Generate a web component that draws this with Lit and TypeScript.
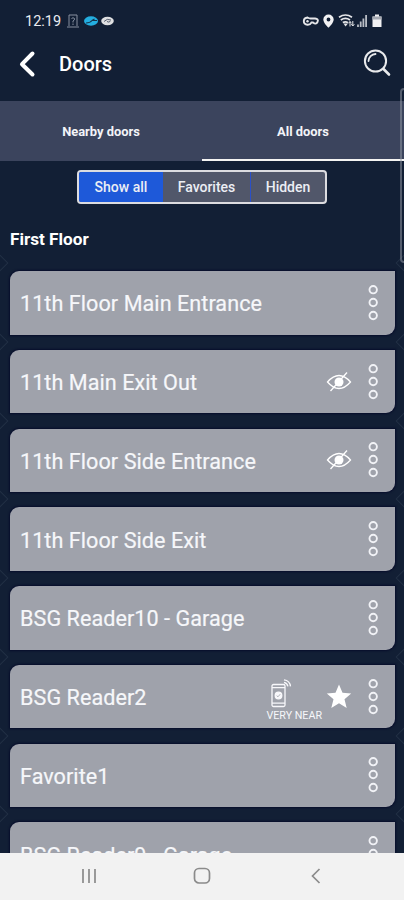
import { LitElement, html, css, svg, nothing } from "lit";
import { customElement, property } from "lit/decorators.js";

interface Door {
  name: string;
  state?: "hidden" | "near";
}

const DOORS: Door[] = [
  { name: "11th Floor Main Entrance" },
  { name: "11th Main Exit Out", state: "hidden" },
  { name: "11th Floor Side Entrance", state: "hidden" },
  { name: "11th Floor Side Exit" },
  { name: "BSG Reader10 - Garage" },
  { name: "BSG Reader2", state: "near" },
  { name: "Favorite1" },
  { name: "BSG Reader9 - Garage" },
];

@customElement("door-card")
export class DoorCard extends LitElement {
  @property({ attribute: false }) door!: Door;

  static styles = css`
    :host {
      position: relative;
      display: flex;
      align-items: center;
      box-sizing: border-box;
      flex: none;
      height: 63.5px;
      padding: 0 15px 0 10px;
      background: #9fa2ab;
      border-radius: 9px 0 9px 0;
      box-shadow: 0 0 2px 1px #070d2b;
      color: #f6f7fa;
    }
    /* faint diamond ornaments at the screen edges, between the cards */
    :host::before,
    :host::after {
      content: "";
      position: absolute;
      top: -14px;
      width: 10px;
      height: 10px;
      border: 1px solid rgba(120, 135, 150, 0.16);
      transform: rotate(45deg);
    }
    :host::before {
      left: -16px;
    }
    :host::after {
      right: -15px;
    }
    .name {
      flex: 1;
      font-size: 21.6px;
      line-height: 28px;
      letter-spacing: 0.05px;
      padding-top: 3px;
      white-space: nowrap;
      -webkit-text-stroke: 0.2px #f6f7fa;
    }
    svg {
      display: block;
      flex: none;
    }
    .eye,
    .star {
      margin-right: 14px;
    }
    .near {
      display: flex;
      flex-direction: column;
      align-items: center;
      margin: 6px 4px 0 0;
      font-size: 10.700px;
      line-height: 12px;
      white-space: nowrap;
    }
    .near svg {
      margin: 0 26px 1px 0;
    }
  `;

  private extras() {
    if (this.door.state === "hidden") {
      return html`<svg class="eye" width="26" height="24" viewBox="0 0 26 24" fill="none" stroke="#fff" stroke-width="1.3">
        <path d="M1.500 12Q13 -1 24.500 12Q13 25 1.500 12Z" />
        <circle cx="13" cy="12" r="4.500" fill="#fff" stroke="none" />
        <path d="M4.500 21L21 2.500" />
      </svg>`;
    }
    if (this.door.state === "near") {
      return html`<div class="near">
          <svg width="24" height="32" viewBox="0 0 24 32" fill="none" stroke="#f8f8fb" stroke-width="1.300">
            <rect x="3" y="7.500" width="13" height="22" rx="1.500" />
            <path d="M3 10.700H16M3 26.200H16" />
            <circle cx="9.500" cy="18.500" r="3.300" fill="#f8f8fb" />
            <path d="M7.700 18.700L9 19.800L11.200 17.200" stroke="#9fa2ab" stroke-width=".8" />
            <path d="M15 2.800A7.500 7.500 0 0 1 21.500 9.300M15 5.400A5 5 0 0 1 18.900 9.300" />
          </svg>
          VERY NEAR
        </div>
        <svg class="star" width="26" height="26" viewBox="0 0 26 26">
          <path fill="#fff" d="M13 .5L16.500 8.800L25.200 9.500L18.500 15.300L20.700 24L13 19.300L5.300 24L7.500 15.300L.8 9.500L9.500 8.800Z" />
        </svg>`;
    }
    return nothing;
  }

  render() {
    return html`<span class="name">${this.door.name}</span>${this.extras()}
      <svg width="14" height="38" viewBox="0 0 14 38" fill="none" stroke="#f1f2f6" stroke-width="1.900">
        ${[5.7, 18.5, 31.5].map((y) => svg`<circle cx="7.200" cy=${y} r="3.700" />`)}
      </svg>`;
  }
}

@customElement("app-root")
export class AppRoot extends LitElement {
  static styles = css`
    :host {
      position: relative;
      display: flex;
      flex-direction: column;
      height: 900px;
      overflow: hidden;
      background: #121f35;
      color: #fff;
      font-family: Roboto, sans-serif;
    }
    svg {
      display: block;
      flex: none;
    }
    .status {
      display: flex;
      align-items: center;
      justify-content: space-between;
      height: 42px;
      padding: 0 20px 0 25px;
      box-sizing: border-box;
      flex: none;
    }
    .clock {
      display: flex;
      align-items: center;
      gap: 5px;
      font-size: 14.500px;
      color: #e9ebf0;
    }
    .clock svg:nth-of-type(n + 2) {
      margin-left: -1.500px;
    }
    .header {
      display: flex;
      align-items: center;
      height: 59px;
      flex: none;
      box-sizing: border-box;
      padding: 0 13px 16px 18px;
    }
    .title {
      flex: 1;
      margin-left: 21px;
      font-size: 20px;
      font-weight: 500;
    }
    .search {
      margin-bottom: 2px;
    }
    .tabs {
      display: flex;
      flex: none;
      height: 60px;
      background: #3b445d;
      font-size: 12.900px;
      font-weight: 700;
      color: #f3f4f8;
    }
    .tab {
      display: flex;
      align-items: center;
      justify-content: center;
      flex: 1;
      box-sizing: border-box;
      padding-top: 3px;
      border-bottom: 2px solid transparent;
    }
    .tab.active {
      border-color: #f4f4f2;
    }
    .segments {
      display: flex;
      flex: none;
      align-self: center;
      width: 250px;
      height: 34px;
      margin-top: 8.500px;
      box-sizing: border-box;
      border: 2px solid #dcdce0;
      border-radius: 4px;
      overflow: hidden;
      background: #51576a;
      font-size: 14px;
      font-weight: 500;
      color: #eceef4;
    }
    .segment {
      display: flex;
      align-items: center;
      justify-content: center;
      box-sizing: border-box;
      width: 84px;
    }
    .segment.wide {
      width: 87px;
    }
    .segment.last {
      flex: 1;
      border-left: 1px solid #2a50c8;
    }
    .segment.active {
      background: #1e59d9;
    }
    .section {
      flex: none;
      margin: 25.500px 10px 21px;
      font-size: 17.200px;
      line-height: 21px;
      font-weight: 700;
      letter-spacing: -0.02px;
    }
    .list {
      display: flex;
      flex-direction: column;
      gap: 15.250px;
      flex: 1;
      min-height: 0;
      padding: 16px 9px 0 10px;
      margin-top: -16px;
      overflow: hidden;
    }
    .nav {
      display: flex;
      align-items: center;
      justify-content: space-between;
      flex: none;
      height: 47px;
      box-sizing: border-box;
      padding: 0 79px 1px;
      background: #f2f2f2;
      z-index: 1;
    }
    .edge {
      position: absolute;
      top: 88px;
      right: -4px;
      width: 8px;
      height: 175px;
      box-sizing: border-box;
      border: 2px solid rgba(150, 155, 168, 0.5);
      border-radius: 6px;
    }
  `;

  render() {
    return html`
      <div class="status">
        <div class="clock">
          <span>12:19</span>
          <svg width="14" height="16" viewBox="0 0 14 16" fill="none" stroke="#8790a0" stroke-width="1">
            <path d="M3 13V2H11V13M1 14H13M5.500 5.500Q7 4 8.500 5.500Q9 7 7 8V9.500M7 10.500V12" />
          </svg>
          <svg width="14" height="10" viewBox="0 0 14 10">
            <ellipse cx="7" cy="5" rx="7" ry="4.700" fill="#24aee0" />
            <path d="M2 7Q6 7 8 4.500H13M8 4.500L10.500 3" fill="none" stroke="#14334b" stroke-width="1.100" />
          </svg>
          <svg width="13" height="10" viewBox="0 0 13 10">
            <ellipse cx="6.500" cy="5" rx="6.300" ry="4.200" fill="#dedfe1" />
            <path d="M3 5.500Q6 2 10 4M6 5.500Q8 7 9.500 5" fill="none" stroke="#596170" stroke-width="1" />
          </svg>
        </div>
        <svg width="84" height="16" viewBox="0 0 84 16" fill="none" stroke="#e5e6e9">
          <path d="M7.500 4.500Q9 5.500 10.500 5.500H15Q19 6 17.500 9Q16 12 13 9.500H11.500Q10 12 7.500 11.800Q3.800 11.500 3.800 8Q4 4.800 7.500 4.500Z" stroke-width="1.900" />
          <circle cx="7.500" cy="8.300" r="1.200" fill="#e5e6e9" stroke="none" />
          <path d="M28.500 1.500A5.200 5.200 0 0 0 23.300 6.500C23.300 10 28.500 14.700 28.500 14.700S33.700 10 33.700 6.500A5.200 5.200 0 0 0 28.500 1.500ZM28.500 4.600A1.900 1.900 0 1 1 28.500 8.400A1.900 1.900 0 0 1 28.500 4.600Z" fill="#f1f1f3" fill-rule="evenodd" stroke="none" />
          <path d="M39 4.200Q45.500 -.2 52 4.200M40.800 7Q45.500 3.800 50 7M42.800 9.600Q45.500 8 48 9.600" stroke-width="1.700" />
          <path d="M45.500 13.500L43.500 10.500H48Z" fill="#e5e6e9" stroke="none" />
          <path d="M50 13.500V8.500M48.500 10.300L50 8.500L51.500 10.300M52.800 8V13M51.300 11.200L52.800 13L54.300 11.200" stroke-width="1" />
          <path d="M58 14V11.500M60.700 14V8.500M63.400 14V5.500M66.100 14V2" stroke="#b9bdc5" stroke-width="1.800" />
          <path d="M72.500 3.500H75V1.500H79V3.500H81.500V14H72.500Z" fill="#f1f1f3" stroke="none" />
          <path d="M72.500 3.500H81.500V6.500H72.500Z" fill="#a5a9b2" stroke="none" />
        </svg>
      </div>
      <div class="header">
        <svg width="20" height="28" viewBox="0 0 20 28" fill="none" stroke="#fff" stroke-width="4" stroke-linecap="round" stroke-linejoin="round">
          <path d="M14.500 3.500L4 14.200L14.500 24.500" />
        </svg>
        <span class="title">Doors</span>
        <svg class="search" width="28" height="28" viewBox="0 0 28 28" fill="none" stroke="#e9eaec" stroke-linecap="round">
          <circle cx="12.500" cy="12" r="10.600" stroke-width="2" />
          <path d="M20.500 20L26 25.500" stroke-width="2.600" />
          <path d="M5.500 12A7.200 7.200 0 0 1 12.500 5" stroke-width="1.800" />
        </svg>
      </div>
      <div class="tabs">
        <div class="tab">Nearby doors</div>
        <div class="tab active">All doors</div>
      </div>
      <div class="segments">
        <div class="segment active">Show all</div>
        <div class="segment wide">Favorites</div>
        <div class="segment last">Hidden</div>
      </div>
      <div class="section">First Floor</div>
      <div class="list">
        ${DOORS.map((door) => html`<door-card .door=${door}></door-card>`)}
      </div>
      <div class="nav">
        <svg width="20" height="18" viewBox="0 0 20 18" stroke="#8b8b8b" stroke-width="1.700">
          <path d="M4 2V16M10 2V16M16 2V16" />
        </svg>
        <svg width="20" height="18" viewBox="0 0 20 18" fill="none" stroke="#8b8b8b" stroke-width="1.700">
          <rect x="2.500" y="1.500" width="15" height="14.500" rx="4.500" />
        </svg>
        <svg width="20" height="18" viewBox="0 0 20 18" fill="none" stroke="#8b8b8b" stroke-width="1.700">
          <path d="M14.500 2L7.500 9L14.500 16" />
        </svg>
      </div>
      <div class="edge"></div>
    `;
  }
}
